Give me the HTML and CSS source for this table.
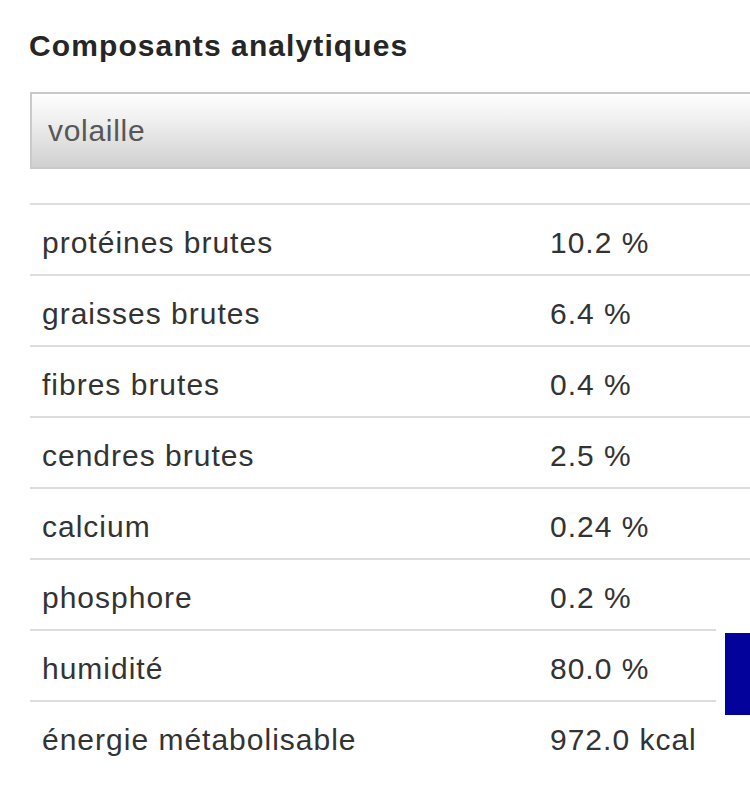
FILE: index.html
```html
<!DOCTYPE html>
<html lang="fr">
<head>
<meta charset="utf-8">
<title>Composants analytiques</title>
<link rel="stylesheet" href="styles.css">
</head>
<body>
<div class="page">
  <h2 class="title">Composants analytiques</h2>
  <div class="select">volaille</div>
  <div class="comp">
    <div class="row"><span>protéines brutes</span><span>10.2 %</span></div>
    <div class="row"><span>graisses brutes</span><span>6.4 %</span></div>
    <div class="row"><span>fibres brutes</span><span>0.4 %</span></div>
    <div class="row"><span>cendres brutes</span><span>2.5 %</span></div>
    <div class="row"><span>calcium</span><span>0.24 %</span></div>
    <div class="row"><span>phosphore</span><span>0.2 %</span></div>
    <div class="row"><span>humidité</span><span>80.0 %</span></div>
    <div class="row"><span>énergie métabolisable</span><span>972.0 kcal</span></div>
  </div>
</div>
<div class="float-tab"><div class="float-tab__blue"></div></div>
</body>
</html>
```

FILE: styles.css
```css
html, body {
  margin: 0;
  padding: 0;
  background: #ffffff;
}
body {
  font-family: "Liberation Sans", Arial, Helvetica, sans-serif;
  color: #333333;
  overflow: hidden;
}
.page {
  padding-left: 30px;
}
.title {
  margin: 28px 0 0 -1px;
  font-size: 30px;
  line-height: 36px;
  font-weight: bold;
  letter-spacing: 1.1px;
  color: #262626;
}
.select {
  margin-top: 28px;
  width: 715px;
  height: 73px;
  border: 2px solid #c9c9c9;
  border-right-color: #d6d6d6;
  background: linear-gradient(to bottom, #fefefe 0%, #f0f0f0 35%, #dcdcdc 75%, #d0d0d0 100%);
  font-size: 30px;
  line-height: 74px;
  letter-spacing: 0.7px;
  color: #575757;
  padding-left: 16px;
  box-sizing: content-box;
}
.comp {
  margin-top: 34px;
  width: 720px;
}
.row {
  display: grid;
  grid-template-columns: 508px 1fr;
  padding: 20px 0 13px 12px;
  border-top: 2px solid #dddddd;
  font-size: 30px;
  line-height: 36px;
  letter-spacing: 1px;
  color: #333333;
}
.float-tab {
  position: absolute;
  left: 716px;
  top: 622px;
  width: 34px;
  height: 98px;
  background: #ffffff;
}
.float-tab__blue {
  margin: 11px 0 0 9px;
  width: 25px;
  height: 82px;
  background: #03039b;
}
```
